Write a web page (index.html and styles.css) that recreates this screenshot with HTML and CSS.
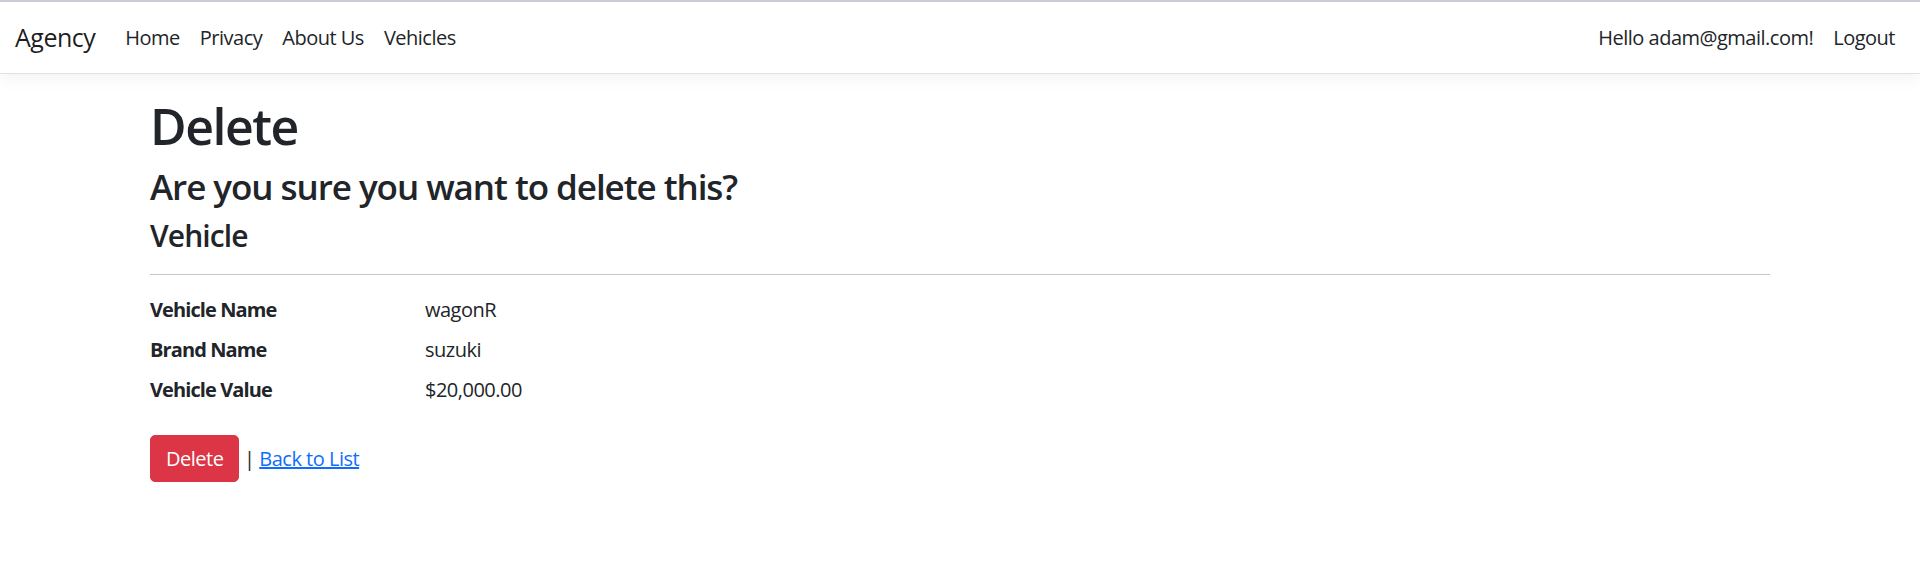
FILE: index.html
```html
<!DOCTYPE html>
<html lang="en">
<head>
<meta charset="utf-8">
<title>Delete - Agency</title>
<link rel="stylesheet" href="styles.css">
</head>
<body>
<header>
  <nav class="navbar">
    <div class="navbar-inner">
      <a class="brand" href="#">Agency</a>
      <ul class="nav nav-main">
        <li><a class="nav-link" href="#">Home</a></li>
        <li><a class="nav-link" href="#">Privacy</a></li>
        <li><a class="nav-link" href="#">About Us</a></li>
        <li><a class="nav-link" href="#">Vehicles</a></li>
      </ul>
      <ul class="nav nav-user">
        <li><a class="nav-link" href="#">Hello adam@gmail.com!</a></li>
        <li><button class="nav-link nav-button" type="button">Logout</button></li>
      </ul>
    </div>
  </nav>
</header>
<div class="container">
  <main class="main">
    <h1 class="title">Delete</h1>
    <h3 class="question">Are you sure you want to delete this?</h3>
    <div>
      <h4 class="entity">Vehicle</h4>
      <hr class="rule">
      <dl class="details">
        <dt>Vehicle Name</dt>
        <dd>wagonR</dd>
        <dt>Brand Name</dt>
        <dd>suzuki</dd>
        <dt>Vehicle Value</dt>
        <dd>$20,000.00</dd>
      </dl>
      <form class="actions">
        <button type="button" class="btn-danger">Delete</button> | <a class="back-link" href="#">Back to List</a>
      </form>
    </div>
  </main>
</div>
</body>
</html>
```

FILE: styles.css
```css
* { box-sizing: border-box; }

html, body {
  margin: 0;
  padding: 0;
}

body {
  font-family: "Open Sans", "Liberation Sans", sans-serif;
  font-size: 20px;
  line-height: 1.5;
  letter-spacing: -0.025em;
  color: #212529;
  background: #fff;
  border-top: 2px solid #c9cbdb;
}

.navbar {
  background: #fff;
  border-bottom: 1px solid #dee2e6;
  box-shadow: 0 5px 15px rgba(0, 0, 0, 0.05);
  margin-bottom: 22px;
  padding: 10.5px 0;
}

.navbar-inner {
  display: flex;
  align-items: center;
  padding: 0 15px;
}

.brand {
  font-size: 25px;
  line-height: 37.5px;
  padding: 6px 0;
  margin-right: 20px;
  color: rgba(0, 0, 0, 0.9);
  text-decoration: none;
}

.nav {
  display: flex;
  list-style: none;
  margin: 0;
  padding: 0;
}

.nav-main { flex: 1; }

.nav-link {
  display: block;
  padding: 10px 10px;
  color: #212529;
  text-decoration: none;
  font: inherit;
  letter-spacing: inherit;
  line-height: 30px;
}

.nav-button {
  background: none;
  border: 0;
  cursor: pointer;
}

.container {
  max-width: 1650px;
  margin: 0 auto;
  padding: 0 15px;
}

.main { padding-bottom: 20px; }

.title,
.question,
.entity {
  margin: 0 0 10px;
  font-weight: 600;
  letter-spacing: -0.03em;
  line-height: 1.2;
}

.title { font-size: 50px; }
.question { font-size: 35px; }
.entity { font-size: 30px; }

.rule {
  margin: 20px 0;
  border: 0;
  border-top: 1px solid #c8c8c8;
}

.details {
  display: grid;
  grid-template-columns: 275px 1fr;
  margin: 0 0 20px;
}

.details dt {
  font-weight: 700;
  letter-spacing: -0.045em;
  margin: 0;
}

.details dd {
  margin: 0 0 10px;
}

.actions { margin: 0; }

.btn-danger {
  font: inherit;
  letter-spacing: inherit;
  line-height: 30px;
  padding: 7.5px 15px;
  color: #fff;
  background: #dc3545;
  border: 1px solid #dc3545;
  border-radius: 5px;
  cursor: pointer;
}

.back-link { color: #0d6efd; text-decoration: underline; }
```
